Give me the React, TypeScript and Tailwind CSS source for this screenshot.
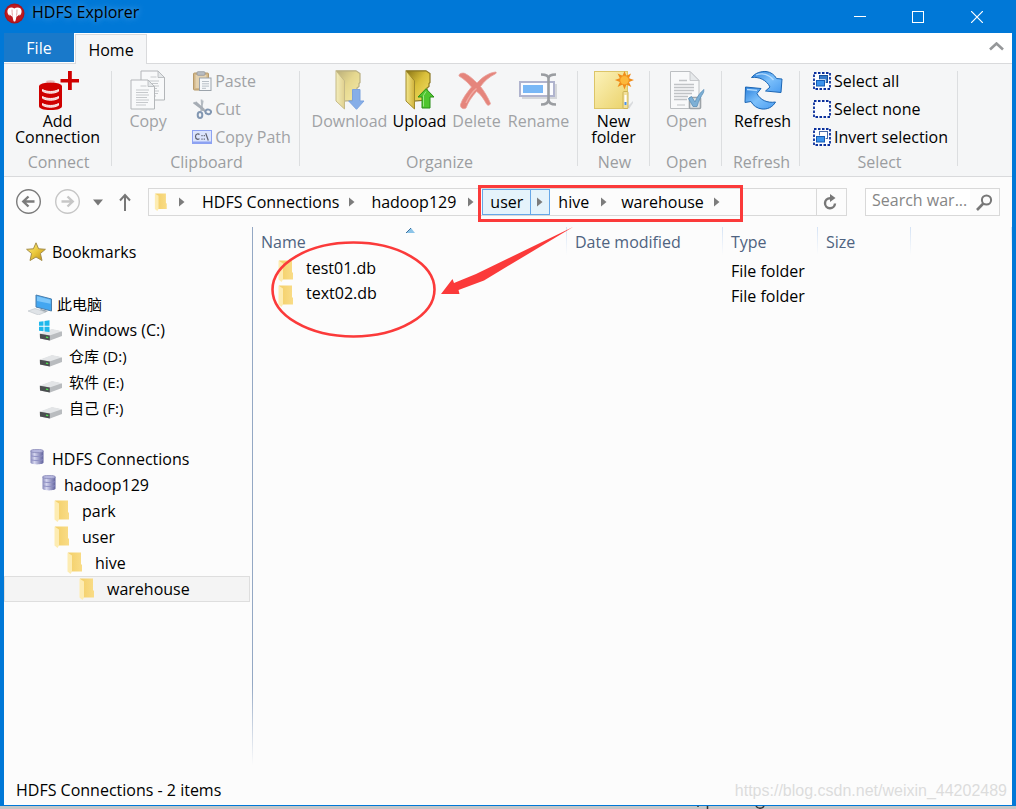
import React from 'react';

type P = { className?: string };

/* ---------- icons ---------- */

const LogoIcon = () => (
  <svg width="21" height="21" viewBox="0 0 21 21" aria-hidden="true">
    <circle cx="10.5" cy="10.5" r="10" fill="#a8141c" />
    <circle cx="10.5" cy="10.5" r="8.800" fill="#bd1a20" />
    <path d="M10.3 5.400C8.800 4.300 6.200 4.200 4.700 5.300 3.300 6.600 3 9 3.900 10.800c.4.900 1 1.500 1.800 1.900v-1.400c.6 1.200 1.600 2 2.800 2.300.4 1.500.6 3.500 1.200 4.600.3.500 1.300.5 1.600 0 .6-1.100.8-3.100 1.200-4.600 1.200-.3 2.200-1.100 2.800-2.300v1.400c.8-.4 1.400-1 1.800-1.900.9-1.800.6-4.200-.8-5.500-1.500-1.100-4.400-1-6 .1z" fill="#fff" />
    <path d="M8 6.500c.2 2.200 0 4.400.4 6.200M13 6.500c-.2 2.200 0 4.400-.4 6.200" stroke="#d98a8c" strokeWidth=".8" fill="none" />
  </svg>
);

const AddConnectionIcon = () => (
  <svg width="42" height="40" viewBox="0 0 42 40" aria-hidden="true">
    <path d="M9.500 12c2-1 6-1 8 0" stroke="#e8b9b9" strokeWidth="2" fill="none" />
    <ellipse cx="13.500" cy="16" rx="11.500" ry="3.600" fill="#cf0000" />
    <path d="M2 16h23v20c0 2.500-4 4-11.500 4S2 38.500 2 36z" fill="#cf0000" />
    <path d="M5.500 19.500c4 2.600 12 2.600 16 0v1.800c-4 2.600-12 2.600-16 0zM5.500 26.500c4 2.600 12 2.600 16 0v1.800c-4 2.600-12 2.600-16 0zM5.500 33.500c4 2.600 12 2.600 16 0v1.800c-4 2.600-12 2.600-16 0z" fill="#f3c9c9" stroke="#fff" strokeWidth=".9" />
    <path d="M31 1h3.800v8H42v3.400h-7.200V20H31v-7.600h-7.500V9H31z" fill="#cf0000" />
  </svg>
);

const Page = ({ x, y }: { x: number; y: number }) => (
  <g transform={`translate(${x} ${y})`}>
    <path d="M.5.5h17l6.500 6.500v22.500H.5z" fill="#f8f9fa" stroke="#b3b6b9" />
    <path d="M17.500.5V7H24z" fill="#e4e7e9" stroke="#b3b6b9" strokeWidth=".8" />
    <path d="M10 6.500h6M5.500 10.500h13M5.500 13h12M5.500 15.500h13M5.500 18h11M5.500 20.500h13M5.500 23h12M5.500 25.500h10" stroke="#c6c9cc" strokeWidth="1.100" />
  </g>
);

const CopyIcon = () => (
  <svg width="36" height="40" viewBox="0 0 36 40" aria-hidden="true">
    <Page x={10.500} y={0.500} />
    <Page x={0.500} y={9.500} />
  </svg>
);

const PasteIcon = () => (
  <svg width="20" height="20" viewBox="0 0 20 20" aria-hidden="true">
    <rect x="1.500" y="2" width="15" height="17" rx="1" fill="#d2b78a" stroke="#b79a6a" />
    <rect x="3.500" y="4" width="11" height="13" fill="#e4d2b0" />
    <rect x="5" y=".7" width="8" height="3.600" rx="1" fill="#b9bdc2" stroke="#94989d" strokeWidth=".8" />
    <rect x="7.500" y="7" width="11.500" height="12.500" fill="#f6f8fa" stroke="#9ba3ab" />
    <path d="M10 10.500h7M10 12.800h7M10 15.100h7M10 17.300h4" stroke="#b8bfc6" />
  </svg>
);

const CutIcon = () => (
  <svg width="20" height="20" viewBox="0 0 20 20" aria-hidden="true" fill="none">
    <path d="M9.500.5l.8 11.500M10.800 1.500L9 12" stroke="#b3bac1" strokeWidth="1.700" />
    <path d="M1.500 3.500l12 9M3.500 3l9 8" stroke="#a5acb4" strokeWidth="1.700" />
    <ellipse cx="8" cy="16" rx="2.300" ry="3" stroke="#8297b2" strokeWidth="2" />
    <ellipse cx="16.200" cy="12.800" rx="2.800" ry="2.300" stroke="#8297b2" strokeWidth="2" transform="rotate(15 16 13)" />
  </svg>
);

const CopyPathIcon = () => (
  <svg width="20" height="16" viewBox="0 0 20 16" aria-hidden="true">
    <rect x=".5" y="1.500" width="19" height="13" fill="#dbe4fc" stroke="#8da2f2" />
    <rect x="1" y="12.500" width="18" height="2" fill="#8da2f2" />
    <path d="M7.500 5.500C6.500 4.500 3.500 4.500 3.500 7.500s3 3.300 4 2.200M10 6v1.300M10 9.500v1.300M12.300 6v1.300M12.300 9.500v1.300M13.700 4.200l2.600 7.300" stroke="#5f6270" strokeWidth="1.200" fill="none" />
  </svg>
);

const BigFolder = ({ id }: { id: string }) => (
  <>
    <defs>
      <linearGradient id={id} x1="0" x2="1" y1="0" y2="1">
        <stop offset="0" stopColor="#8a7414" />
        <stop offset=".45" stopColor="#d9bf3a" />
        <stop offset="1" stopColor="#f5e26a" />
      </linearGradient>
      <linearGradient id={id + 'f'} x1="0" x2="1">
        <stop offset="0" stopColor="#f4e88e" />
        <stop offset="1" stopColor="#d0b23a" />
      </linearGradient>
    </defs>
    <path d="M1.500.8H21l4 2.700v9l-1 1v3l-2 1.500v12L9 31z" fill={`url(#${id})`} stroke="#8a7722" strokeWidth="1.200" />
    <path d="M1 .8l8.500 10V39L1 31z" fill={`url(#${id}f)`} stroke="#a08a2c" strokeWidth="1" />
  </>
);

const DownloadIcon = () => (
  <svg width="30" height="40" viewBox="0 0 30 40" aria-hidden="true">
    <g opacity=".55"><BigFolder id="bd" /></g>
    <path d="M17.500 19.500h7.500v11.500h4l-7.500 8.300-7.800-8.300h3.800z" fill="#86aee8" stroke="#7ba2de" />
  </svg>
);

const UploadIcon = () => (
  <svg width="30" height="40" viewBox="0 0 30 40" aria-hidden="true">
    <BigFolder id="bu" />
    <path d="M17 38V27h-4l8-8.300 8 8.300h-4v11z" fill="#4fc52f" stroke="#2a8e18" />
    <path d="M18.500 36.500V25.500l2.500-4" stroke="#9be883" fill="none" />
  </svg>
);

const DeleteIcon = () => (
  <svg width="40" height="40" viewBox="0 0 40 40" aria-hidden="true">
    <path d="M2 6c-.5-2.500 3.500-3.500 6-2.500 5 2.500 8.500 6 12 9.500C25 7.500 31 3 38.500 2c1 0 1 1 0 1.800C32 7 27.500 11 23.500 16.500c4 5 7.500 11 10 17-1 2.500-3 2-4 .5C26.500 28.500 23 23.500 19.500 21.500 14.500 27 11 32.500 9 38c-2 1.500-6 .5-5.500-3.500C5.500 28.500 9.500 23 14.500 17 11 12.500 7.500 9.500 2 6z" fill="#e5857c" stroke="#e9a19a" strokeWidth=".8" />
    <path d="M9 33c3-6 6-11 10.500-14.500" stroke="#f0aaa3" strokeWidth="1.500" fill="none" />
  </svg>
);

const RenameIcon = () => (
  <svg width="40" height="40" viewBox="0 0 40 40" aria-hidden="true" fill="none">
    <path d="M3 28h34V14" stroke="#d5d7da" strokeWidth="2" />
    <rect x="1" y="12" width="34" height="14" fill="#fbfcff" stroke="#b0b4ce" strokeWidth="2" />
    <rect x="4" y="15" width="20" height="8" fill="#79b8f6" />
    <path d="M22 4.500c4 0 7.500 1 7.500 4v21c0 4-3.500 5-7.500 5M37 4.500c-4 0-7.500 1-7.500 4v21c0 4 3.500 5 7.500 5" stroke="#9a9da1" strokeWidth="2.600" />
  </svg>
);

const NewFolderIcon = () => (
  <svg width="42" height="40" viewBox="0 0 42 40" aria-hidden="true">
    <defs>
      <linearGradient id="nf" x1="0" y1="0" x2="1" y2="1">
        <stop offset="0" stopColor="#fcf2ba" />
        <stop offset="1" stopColor="#ead26a" />
      </linearGradient>
    </defs>
    <path d="M34 37l6-6v2l-4 6z" fill="#d9dbde" />
    <rect x="1.500" y="1.500" width="33" height="37" fill="url(#nf)" stroke="#dcc568" />
    <rect x="30" y="21.500" width="5" height="17" rx="1" fill="#f2e09a" stroke="#cdb457" />
    <rect x="31.500" y="25" width="2" height="10" fill="#fff" />
    <rect x="31.500" y="32" width="2" height="3" fill="#4a90e8" />
    <path d="M31.500 1l1.900 4.700 4.600-2.300-2 4.800 5 1.900-5 1.900 2.300 4.900-4.900-2.300-1.900 5-1.900-5-5 2.300 2.300-4.900-5-1.900 5-1.900-2.300-4.800 5 2.300z" fill="#f08c1a" />
    <circle cx="31.500" cy="10.200" r="4.600" fill="#fcb83a" stroke="#f08c1a" strokeWidth=".7" />
  </svg>
);

const OpenIcon = () => (
  <svg width="36" height="40" viewBox="0 0 36 40" aria-hidden="true">
    <path d="M1.500 1.500h19.500l9 9v28H1.500z" fill="#f8f9fa" stroke="#bcbfc2" />
    <path d="M21 1.500v9h9z" fill="#e6e9eb" stroke="#bcbfc2" strokeWidth=".8" />
    <path d="M10 10.500h8M5 14.500h20M5 17.500h20M5 20.500h20M5 23.500h18M5 26.500h14M5 29.500h13" stroke="#c0c3c6" strokeWidth="1.300" />
    <path d="M8 35h8" stroke="#c0c3c6" />
    <rect x="20.500" y="27.500" width="11" height="11" rx="1" fill="#e3e7ea" stroke="#9da3a8" strokeWidth="1.600" />
    <path d="M19.500 28.500l3-2 3.500 5.500c2-5 5-9.500 9-12.500-.5 1.500 0 1.500-.5 3-2.500 4-5 8.500-6.500 14h-4z" fill="#7db0d6" stroke="#5b8fb7" strokeWidth=".8" />
  </svg>
);

const RefreshIcon = () => (
  <svg width="40" height="40" viewBox="0 0 40 40" aria-hidden="true">
    <defs>
      <linearGradient id="rf" x1="0" y1="0" x2="1" y2="1">
        <stop offset="0" stopColor="#2a80dc" />
        <stop offset=".5" stopColor="#7cc0fb" />
        <stop offset="1" stopColor="#4a9cf0" />
      </linearGradient>
    </defs>
    <path d="M8.500 7.500C12 3 18 1.200 23 1.500c5 .5 8.500 3.500 10.500 7l5.500.5-1 13.500-15.500-1.500 4.500-4C23.500 10 16 6.500 8.500 7.500z" fill="url(#rf)" stroke="#1c66b4" strokeWidth="1" strokeLinejoin="round" />
    <path d="M32.500 32C29.500 37.500 24 39.500 19 39c-5-.5-9-3.500-11-7.500L2 32.500l.5-15.500L18 18.500l-4 5c3 6.500 10.500 9.800 18.500 8.500z" fill="url(#rf)" stroke="#1c66b4" strokeWidth="1" strokeLinejoin="round" />
    <path d="M13 5c6-2.500 13-1 17.500 5M4 19.500l10 .8" stroke="#b5dcfd" strokeWidth="1.300" fill="none" />
  </svg>
);

const SelectIcon = ({ kind }: { kind: 'all' | 'none' | 'invert' }) => (
  <svg width="18" height="18" viewBox="0 0 18 18" aria-hidden="true">
    <rect x="1" y="1" width="16" height="16" fill="#fcfdff" stroke="#0a2f9c" strokeWidth="1.800" strokeDasharray="2.500 1.500" />
    {kind === 'all' && <rect x="6.500" y="3.500" width="8" height="7" fill="#3578c8" stroke="#174f98" />}
    {kind === 'invert' && <rect x="6.500" y="3.500" width="8" height="7" fill="#fff" stroke="#4a6ca8" />}
    {kind !== 'none' && (
      <>
        <rect x="3" y="8" width="9" height="6.500" fill="#2f86e0" stroke="#fff" strokeWidth="1.400" />
        <rect x="3.500" y="8.500" width="8" height="5.500" fill="#3c92ea" stroke="#155cb4" />
      </>
    )}
  </svg>
);

const FolderIcon = () => (
  <svg width="16" height="22" viewBox="0 0 16 22" aria-hidden="true" className="flex-none">
    <defs>
      <linearGradient id="sf" x1="0" x2="1">
        <stop offset="0" stopColor="#f3cf68" />
        <stop offset="1" stopColor="#f9dc87" />
      </linearGradient>
    </defs>
    <path d="M1 .5h13v11.500l1 1v6.500H4z" fill="url(#sf)" />
    <path d="M.5.500l4.500 3v16l-1.500 2.500-3-2.500z" fill="#fdecb2" />
  </svg>
);

const StarIcon = () => (
  <svg width="20" height="20" viewBox="0 0 20 20" aria-hidden="true">
    <defs>
      <linearGradient id="st" x1="0" y1="0" x2="1" y2="1">
        <stop offset="0" stopColor="#fdf08a" />
        <stop offset=".5" stopColor="#eac83c" />
        <stop offset="1" stopColor="#b98a10" />
      </linearGradient>
    </defs>
    <path d="M10 .8l2.600 6 6.800.5-5 4.200 1.600 7L10 15l-6 3.500 1.600-7-5-4.200L7.400 6.800z" fill="url(#st)" stroke="#a58e4a" strokeWidth="1" strokeLinejoin="round" />
  </svg>
);

const ComputerIcon = () => (
  <svg width="25" height="22" viewBox="0 0 25 22" aria-hidden="true">
    <path d="M8 2l15.500 4v12L8 14z" fill="#43a6f0" stroke="#4b7fad" />
    <path d="M9 3.200l13.500 3.500v4L9 8z" fill="#7cc6fa" />
    <path d="M13 16l7 2-4 2-6-1.500z" fill="#9aa4ad" />
    <path d="M0 18l7-2.500 10.500 3.500-7 3z" fill="#dfe3e7" stroke="#c3c9ce" strokeWidth=".7" />
  </svg>
);

const DiskIcon = ({ win }: { win?: boolean }) => (
  <svg width="24" height="22" viewBox="0 0 24 22" aria-hidden="true">
    <path d="M1 15l12-4.500 10 2v4.500L11 21.500 1 19.500z" fill="#b9bcbf" />
    <path d="M1 14.500l12-4.500 10 2.300-12.500 4.200z" fill="#e3e5e7" />
    <path d="M.8 14.800l10 1.700v5L1 19.500z" fill="#4b4e50" />
    <path d="M7 18.200l2.200.5" stroke="#4fe04f" strokeWidth="1.300" />
    {win && <path d="M0 2.800l4.500-.6v4.500H0zM5.500 2l5-.7v5.400h-5zM0 7.800h4.500v4.500L0 11.700zM5.500 7.800h5v5.200l-5-.6z" fill="#1fb8ec" />}
  </svg>
);

const DbIcon = () => (
  <svg width="14" height="21" viewBox="0 0 14 21" aria-hidden="true">
    <defs>
      <linearGradient id="db" x1="0" x2="1">
        <stop offset="0" stopColor="#8586b8" />
        <stop offset=".3" stopColor="#d6d7f0" />
        <stop offset="1" stopColor="#5f609c" />
      </linearGradient>
    </defs>
    <path d="M.5 2v11.500c0 2.500 13 2.500 13 0V2z" fill="url(#db)" />
    <path d="M1 6.500c1 1.300 11 1.300 12 0M1 10.500c1 1.300 11 1.300 12 0" stroke="#8f90c4" fill="none" />
    <ellipse cx="7" cy="2" rx="6.500" ry="1.700" fill="#b5b6dd" stroke="#7f80b2" strokeWidth=".7" />
  </svg>
);

const CircleArrow = ({ flip, className }: P & { flip?: boolean }) => (
  <svg width="26" height="26" viewBox="0 0 26 26" aria-hidden="true" className={className} fill="none" stroke="currentColor">
    <circle cx="12.500" cy="12.500" r="11.800" strokeWidth="1.400" />
    <path d={flip ? 'M6.500 12.500h11M12.500 7.500l5.200 5-5.200 5' : 'M18.500 12.500h-11M12.500 7.500l-5.200 5 5.200 5'} strokeWidth="2.400" />
  </svg>
);

const Chevron = () => (
  <svg width="6" height="10" viewBox="0 0 6 10" aria-hidden="true">
    <path d="M0 .5L5.500 5 0 9.500z" fill="#7c7c7c" />
  </svg>
);

/* ---------- ribbon parts ---------- */

function Group({ label, width, children, shift = '' }: { label: string; width: string; children: React.ReactNode; shift?: string }) {
  return (
    <>
      <section aria-label={label} className={`flex flex-none flex-col pt-1.5 ${width}`}>
        <div className={`flex h-[84px] justify-center ${shift}`}>{children}</div>
        <div className="pl-0.5 text-center leading-4 text-[#9b9da0]">{label}</div>
      </section>
      <div className="mt-[7px] mb-2.5 w-px flex-none bg-[#dcdee0]" />
    </>
  );
}

function BigButton({ icon, children, width, disabled }: { icon: React.ReactNode; children: React.ReactNode; width: string; disabled?: boolean }) {
  return (
    <button disabled={disabled} className={`flex flex-none flex-col items-center leading-4 text-black disabled:text-[#a0a2a5] ${width}`}>
      <span className="mb-[3px] flex h-10 items-center">{icon}</span>
      {children}
    </button>
  );
}

function SmallButton({ icon, children, disabled }: { icon: React.ReactNode; children: React.ReactNode; disabled?: boolean }) {
  return (
    <button disabled={disabled} className="flex h-[22px] items-center gap-[3px] whitespace-nowrap text-black disabled:text-[#a0a2a5]">
      {icon}
      {children}
    </button>
  );
}

function TreeRow({ icon, children, className, selected }: { icon: React.ReactNode; children: React.ReactNode; className: string; selected?: boolean }) {
  return (
    <li>
      <button
        aria-current={selected ? 'true' : undefined}
        className={`flex h-[26px] w-full items-center border text-left whitespace-nowrap ${selected ? 'border-[#dedede] bg-[#f4f4f4]' : 'border-transparent'} ${className}`}
      >
        {icon}
        {children}
      </button>
    </li>
  );
}

const files = [
  { name: 'test01.db', type: 'File folder' },
  { name: 'text02.db', type: 'File folder' },
];

function HeadCell({ children }: { children?: React.ReactNode }) {
  return (
    <th scope="col" className="p-0 font-normal">
      <div className="flex h-[31px]">
        <span className="flex-1 pl-2 text-left leading-[30px] text-[#4f6380]">{children}</span>
        <span className="h-7 w-px bg-linear-to-b from-[#d5e3f5] to-[#fcfcfc]" />
      </div>
    </th>
  );
}

export default function App() {
  return (
    <div className="relative flex h-screen flex-col overflow-hidden bg-[#c6c6c6] font-['Open_Sans','Noto_Sans_CJK_SC',sans-serif] text-[16px] text-black">
      <div className="flex min-h-0 flex-1 flex-col border-x-4 border-b border-[#0078d7] bg-[#fcfcfc]">
        {/* title bar */}
        <header className="flex h-[33px] flex-none items-start bg-[#0078d7]">
          <div className="flex flex-1 items-start gap-[7px] pt-[3px]">
            <LogoIcon />
            <h1 className="leading-[18px] [text-shadow:0_0_6px_#6fb4ee]">HDFS Explorer</h1>
          </div>
          <button aria-label="Minimize" className="flex h-[33px] w-[58px] items-center justify-center">
            <svg width="12" height="12" viewBox="0 0 12 12"><path d="M0 5.500h12" stroke="#fff" /></svg>
          </button>
          <button aria-label="Maximize" className="flex h-[33px] w-[58px] items-center justify-center">
            <svg width="12" height="12" viewBox="0 0 12 12"><rect x=".5" y=".5" width="11" height="11" stroke="#fff" fill="none" /></svg>
          </button>
          <button aria-label="Close" className="mr-1.5 flex h-[33px] w-[59px] items-center justify-center">
            <svg width="12" height="12" viewBox="0 0 12 12"><path d="M0 0l12 12M12 0L0 12" stroke="#fff" strokeWidth="1.200" /></svg>
          </button>
        </header>

        {/* tabs */}
        <div className="flex h-[31px] flex-none border-b border-[#d9dadc] bg-white">
          <button className="h-[29px] w-[70px] bg-[#1979ca] text-white">File</button>
          <button className="mt-px -mb-px ml-px h-[30px] w-[72px] border border-b-0 border-[#d9dadc] bg-[#f5f6f7]">Home</button>
          <button aria-label="Collapse ribbon" className="mr-2 ml-auto flex items-center pb-1">
            <svg width="15" height="9" viewBox="0 0 15 9"><path d="M1 7.500l6.500-6 6.500 6" stroke="#959799" strokeWidth="2.600" fill="none" /></svg>
          </button>
        </div>

        {/* ribbon */}
        <div className="flex h-[113px] flex-none border-b border-[#d9dadc] bg-[#f5f6f7]">
          <Group label="Connect" width="w-[107px]">
            <BigButton icon={<AddConnectionIcon />} width="w-[100px]">
              <span>Add</span>
              <span>Connection</span>
            </BigButton>
          </Group>
          <Group label="Clipboard" width="w-[187px]" shift="pr-1">
            <BigButton icon={<CopyIcon />} width="w-16" disabled>Copy</BigButton>
            <div className="flex flex-col gap-1.5 pl-3">
              <SmallButton icon={<PasteIcon />} disabled>Paste</SmallButton>
              <SmallButton icon={<CutIcon />} disabled>Cut</SmallButton>
              <SmallButton icon={<CopyPathIcon />} disabled>Copy Path</SmallButton>
            </div>
          </Group>
          <Group label="Organize" width="w-[277px]" shift="pl-1.5">
            <BigButton icon={<DownloadIcon />} width="w-20" disabled>Download</BigButton>
            <BigButton icon={<UploadIcon />} width="w-[60px]">Upload</BigButton>
            <BigButton icon={<DeleteIcon />} width="w-[54px]" disabled>Delete</BigButton>
            <BigButton icon={<RenameIcon />} width="w-[70px]" disabled>Rename</BigButton>
          </Group>
          <Group label="New" width="w-[71px]">
            <BigButton icon={<NewFolderIcon />} width="w-16">
              <span>New</span>
              <span>folder</span>
            </BigButton>
          </Group>
          <Group label="Open" width="w-[71px]" shift="pl-0.5">
            <BigButton icon={<OpenIcon />} width="w-16" disabled>Open</BigButton>
          </Group>
          <Group label="Refresh" width="w-[77px]" shift="pl-1">
            <BigButton icon={<RefreshIcon />} width="w-16">Refresh</BigButton>
          </Group>
          <Group label="Select" width="w-[157px]" shift="pl-1">
            <div className="flex flex-col gap-1.5">
              <SmallButton icon={<SelectIcon kind="all" />}>Select all</SmallButton>
              <SmallButton icon={<SelectIcon kind="none" />}>Select none</SmallButton>
              <SmallButton icon={<SelectIcon kind="invert" />}>Invert selection</SmallButton>
            </div>
          </Group>
        </div>

        {/* address bar */}
        <nav aria-label="Address" className="flex h-[50px] flex-none items-center pr-3 pl-3">
          <button aria-label="Back"><CircleArrow className="text-[#7b7b7b]" /></button>
          <button aria-label="Forward" className="ml-[13px]"><CircleArrow flip className="text-[#c6c6c6]" /></button>
          <button aria-label="Recent locations" className="ml-3">
            <svg width="10" height="7" viewBox="0 0 10 7"><path d="M0 .5h10L5 6.500z" fill="#777" /></svg>
          </button>
          <button aria-label="Up" className="ml-4">
            <svg width="12" height="18" viewBox="0 0 12 18"><path d="M6 18V2M1 7.500l5-5.500 5 5.500" stroke="#777" strokeWidth="2" fill="none" /></svg>
          </button>
          <div className="ml-[17px] flex h-7 min-w-0 flex-1 items-center border border-[#d9d9d9]">
            <span className="flex w-[27px] pl-1 [&>svg]:h-[18px]"><FolderIcon /></span>
            <span className="flex w-3 justify-center"><Chevron /></span>
            <button className="ml-3.5">HDFS Connections</button>
            <span className="ml-2.5 flex w-3"><Chevron /></span>
            <button className="ml-2.5">hadoop129</button>
            <span className="ml-3 flex w-3.5"><Chevron /></span>
            <span className="flex h-[26px] border border-[#66a7e8] bg-[#e5f3fb]">
              <button className="border-r border-[#66a7e8] px-[7px]">user</button>
              <button aria-label="Folders in user" className="flex w-[18px] items-center justify-center"><Chevron /></button>
            </span>
            <button className="ml-2">hive</button>
            <span className="ml-3 flex w-3"><Chevron /></span>
            <button className="ml-2">warehouse</button>
            <span className="ml-2.5 flex w-3"><Chevron /></span>
            <button aria-label="Reload" className="ml-auto flex h-full w-[30px] items-center justify-center border-l border-[#d9d9d9] pr-1">
              <svg width="14" height="18" viewBox="0 0 14 18" fill="none">
                <path d="M12 10.500a5 5 0 1 1-5-5.300h1" stroke="#777" strokeWidth="2.400" />
                <path d="M7 1l5.500 4L7 9z" fill="#777" />
              </svg>
            </button>
          </div>
          <div className="ml-[18px] flex h-7 w-[135px] flex-none items-center border border-[#d9d9d9]">
            <input aria-label="Search" placeholder="Search war..." className="h-full min-w-0 flex-1 bg-white pb-1 pl-1.5 placeholder:text-[#868686] focus:outline-none" />
            <button aria-label="Run search" className="flex w-[29px] justify-center">
              <svg width="17" height="17" viewBox="0 0 17 17" fill="none" stroke="#777">
                <circle cx="10.500" cy="6" r="4.600" strokeWidth="2" />
                <path d="M7.300 9.500L1 16" strokeWidth="2.600" />
              </svg>
            </button>
          </div>
        </nav>

        {/* body */}
        <div className="flex min-h-0 flex-1">
          <aside className="w-[248px] flex-none pt-3">
            <ul className="pr-0.5">
              <TreeRow icon={<StarIcon />} className="gap-1.5 pl-[21px]">Bookmarks</TreeRow>
            </ul>
            <ul className="mt-[26px] pr-0.5">
              <TreeRow icon={<ComputerIcon />} className="gap-1 pl-[23px] text-[15px]">此电脑</TreeRow>
              <TreeRow icon={<DiskIcon win />} className="gap-1.5 pl-[34px]">Windows (C:)</TreeRow>
              <TreeRow icon={<DiskIcon />} className="gap-1.5 pl-[34px] text-[15px]">仓库 (D:)</TreeRow>
              <TreeRow icon={<DiskIcon />} className="gap-1.5 pl-[34px] text-[15px]">软件 (E:)</TreeRow>
              <TreeRow icon={<DiskIcon />} className="gap-1.5 pl-[34px] text-[15px]">自己 (F:)</TreeRow>
            </ul>
            <ul className="mt-[25px] pr-0.5">
              <TreeRow icon={<DbIcon />} className="gap-2 pl-[25px]">HDFS Connections</TreeRow>
              <TreeRow icon={<DbIcon />} className="gap-2 pl-[37px]">hadoop129</TreeRow>
              <TreeRow icon={<FolderIcon />} className="gap-3 pl-[49px]">park</TreeRow>
              <TreeRow icon={<FolderIcon />} className="gap-3 pl-[49px]">user</TreeRow>
              <TreeRow icon={<FolderIcon />} className="gap-3 pl-[62px]">hive</TreeRow>
              <TreeRow icon={<FolderIcon />} className="gap-3 pl-[74px]" selected>warehouse</TreeRow>
            </ul>
          </aside>
          <div className="mb-2 w-px flex-none bg-linear-to-b from-[#94a8c4] from-85% to-[#fcfcfc]" />
          <main className="min-w-0 flex-1">
            <table className="w-full table-fixed border-collapse">
              <colgroup>
                <col className="w-[314px]" />
                <col className="w-[156px]" />
                <col className="w-[95px]" />
                <col className="w-[93px]" />
                <col />
              </colgroup>
              <thead>
                <tr>
                  <HeadCell>Name</HeadCell>
                  <HeadCell>Date modified</HeadCell>
                  <HeadCell>Type</HeadCell>
                  <HeadCell>Size</HeadCell>
                  <HeadCell />
                </tr>
              </thead>
              <tbody>
                {files.map((f) => (
                  <tr key={f.name} className="h-[25px]">
                    <td className="p-0 pl-[25px]">
                      <div className="flex h-[25px] items-start gap-3 leading-[21px]"><span className="pt-0.5"><FolderIcon /></span>{f.name}</div>
                    </td>
                    <td className="p-0" />
                    <td className="p-0 pl-2 whitespace-nowrap">{f.type}</td>
                    <td className="p-0" />
                    <td className="p-0" />
                  </tr>
                ))}
              </tbody>
            </table>
          </main>
        </div>

        <footer className="flex h-8 flex-none items-center pt-0.5 pl-3">HDFS Connections - 2 items</footer>
      </div>

      {/* strip of the window behind */}
      <div className="flex h-[3px] flex-none">
        <svg width="800" height="3" viewBox="0 0 800 3" aria-hidden="true">
          <path d="M698 0v1M707.500 0v3" stroke="#333" strokeWidth="1.500" />
          <path d="M756 0c1.500 3 6.500 3 8 0" stroke="#333" strokeWidth="1.500" fill="none" />
        </svg>
      </div>

      <div className="pointer-events-none absolute right-[9px] bottom-1.5 font-['Liberation_Sans',sans-serif] text-base text-[#dcdcdc]">
        https://blog.csdn.net/weixin_44202489
      </div>

      {/* sort marker and hand-drawn markup over the window */}
      <svg className="pointer-events-none absolute top-0 left-0" width="800" height="360" viewBox="0 0 800 360" aria-hidden="true">
        <path d="M406 233l5-5 4 5z" fill="#8cc4e8" />
        <path d="M406 233l5-5" stroke="#3c6f9c" />
        <rect x="479.500" y="186.500" width="262" height="34" fill="none" stroke="#fb3a3a" strokeWidth="3" />
        <ellipse cx="353.500" cy="289.500" rx="81" ry="47" fill="none" stroke="#fb3a3a" strokeWidth="2.600" />
        <path d="M441 294l11.500-15 1.500 4 22-9 97-47-89 53.500-25.500 9.500 1 4z" fill="#fb3a3a" />
      </svg>
    </div>
  );
}
